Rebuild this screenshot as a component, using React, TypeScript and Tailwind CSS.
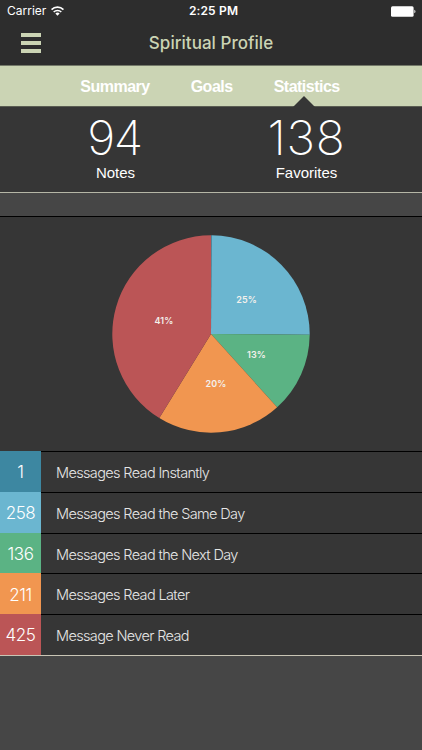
interface Stat {
  label: string;
  count: number;
  color: string;
  fill: string;
  percent?: { text: string; x: number; y: number };
}

const stats: Stat[] = [
  { label: "Messages Read Instantly", count: 1, color: "bg-[#3d87a1]", fill: "#3d87a1" },
  {
    label: "Messages Read the Same Day",
    count: 258,
    color: "bg-[#6bb6d0]",
    fill: "#6bb6d0",
    percent: { text: "25%", x: 134.5, y: 67.5 },
  },
  {
    label: "Messages Read the Next Day",
    count: 136,
    color: "bg-[#5bb384]",
    fill: "#5bb384",
    percent: { text: "13%", x: 144.5, y: 122.5 },
  },
  {
    label: "Messages Read Later",
    count: 211,
    color: "bg-[#f19650]",
    fill: "#f19650",
    percent: { text: "20%", x: 104, y: 151.5 },
  },
  {
    label: "Message Never Read",
    count: 425,
    color: "bg-[#bb5556]",
    fill: "#bb5556",
    percent: { text: "41%", x: 52, y: 89 },
  },
];

const tabs = ["Summary", "Goals", "Statistics"];

function StatusBar() {
  return (
    <div className="grid h-[22px] grid-cols-[1fr_auto_1fr] items-center pl-[7px] pr-[6px] text-white">
      <div className="flex items-center gap-[5px]">
        <span className="text-[12px]">Carrier</span>
        <svg width="13" height="10" viewBox="0 0 14 10" fill="none" stroke="#fff" strokeWidth="1.7">
          <path d="M.6 3.5a9 9 0 0 1 12.8 0" />
          <path d="M2.9 6.1a5.8 5.8 0 0 1 8.2 0" />
          <path d="M7 10 4.7 7.7a3.3 3.3 0 0 1 4.6 0Z" fill="#fff" stroke="none" />
        </svg>
      </div>
      <span className="pl-[4px] text-center text-[12px] font-semibold tracking-[0.15px]">2:25 PM</span>
      <svg className="justify-self-end" width="25" height="11" viewBox="0 0 25 11">
        <rect x="0" y="0.3" width="22.6" height="10.4" rx="1.5" fill="#fff" />
        <path d="M23.4 3.8c1.4.4 1.4 3 0 3.4Z" fill="#fff" />
      </svg>
    </div>
  );
}

function PieChart() {
  const total = stats.reduce((sum, s) => sum + s.count, 0);
  const c = 99;
  const r = 98.7;
  let angle = 0;

  const slices = stats.map((s) => {
    const start = angle;
    angle += (s.count / total) * Math.PI * 2;
    const large = angle - start > Math.PI ? 1 : 0;
    const x1 = c + r * Math.sin(start);
    const y1 = c - r * Math.cos(start);
    const x2 = c + r * Math.sin(angle);
    const y2 = c - r * Math.cos(angle);
    return (
      <path key={s.label} fill={s.fill} d={`M${c} ${c}L${x1} ${y1}A${r} ${r} 0 ${large} 1 ${x2} ${y2}Z`} />
    );
  });

  return (
    <svg width="198" height="198" viewBox="0 0 198 198">
      {slices}
      {stats.map((s) =>
        s.percent ? (
          <text
            key={s.label}
            x={s.percent.x}
            y={s.percent.y}
            textAnchor="middle"
            className="fill-[#f3f0ec] text-[9px] font-semibold tracking-[0.1px]"
          >
            {s.percent.text}
          </text>
        ) : null
      )}
    </svg>
  );
}

export default function App() {
  return (
    <div className="flex h-[750px] w-[422px] flex-col overflow-hidden bg-[#464646] font-['Inter','Liberation_Sans',sans-serif]">
      <header className="h-[66px] border-b border-[#747969] bg-[#2d2d2d]">
        <StatusBar />
        <div className="grid h-[42px] grid-cols-[1fr_auto_1fr] items-center">
          <button className="ml-[21px] flex w-[20px] flex-col gap-1">
            <span className="h-1 bg-[#cbd4b4]" />
            <span className="h-1 bg-[#cbd4b4]" />
            <span className="h-1 bg-[#cbd4b4]" />
          </button>
          <h1 className="pt-px text-[17px] font-medium tracking-[0.03px] text-[#cbd4b4]">Spiritual Profile</h1>
        </div>
      </header>

      <nav className="flex h-[41px] items-center justify-center gap-[41px] border-b border-[#5a5d52] bg-[#cbd4b4] pr-[2px]">
        {tabs.map((tab) => (
          <div key={tab} className="relative flex h-full items-center">
            <span className="pt-[1px] font-['Liberation_Sans',sans-serif] text-[16px] font-bold tracking-[-0.5px] text-white">
              {tab}
            </span>
            {tab === "Statistics" ? (
              <svg className="absolute -bottom-px left-[19px]" width="22" height="11" viewBox="0 0 22 11">
                <path d="M0 11 11 0l11 11Z" fill="#363636" />
              </svg>
            ) : null}
          </div>
        ))}
      </nav>

      <section className="grid h-[86px] grid-cols-[191px_191px] justify-center border-b border-[#b5b6a6] bg-[#363636] text-center text-white">
        <div className="pt-[7px]">
          <p className="pr-[2px] text-[48px] font-extralight leading-[48px] tracking-[-1.5px]">94</p>
          <p className="mt-[2px] font-['Liberation_Sans',sans-serif] text-[15px] leading-[18px]">Notes</p>
        </div>
        <div className="pt-[7px]">
          <p className="text-[48px] font-extralight leading-[48px] tracking-[0.7px]">138</p>
          <p className="mt-[2px] font-['Liberation_Sans',sans-serif] text-[15px] leading-[18px]">Favorites</p>
        </div>
      </section>

      <section className="mt-[23px] flex h-[235px] justify-center border-t border-black bg-[#363636] pt-[18px]">
        <PieChart />
      </section>

      <ul className="flex h-[205px] flex-col border-b border-[#c9c5b5] bg-[#363636]">
        {stats.map((s) => (
          <li key={s.label} className="flex flex-1">
            <span
              className={`flex w-[41px] items-center justify-center pt-[3px] text-[17px] font-light tracking-[-0.4px] text-white ${s.color}`}
            >
              {s.count}
            </span>
            <span className="flex flex-1 items-center border-t border-black pl-[15px] pt-[2px] text-[14.5px] font-light tracking-[-0.64px] text-[#e6e6e6]">
              {s.label}
            </span>
          </li>
        ))}
      </ul>
    </div>
  );
}
